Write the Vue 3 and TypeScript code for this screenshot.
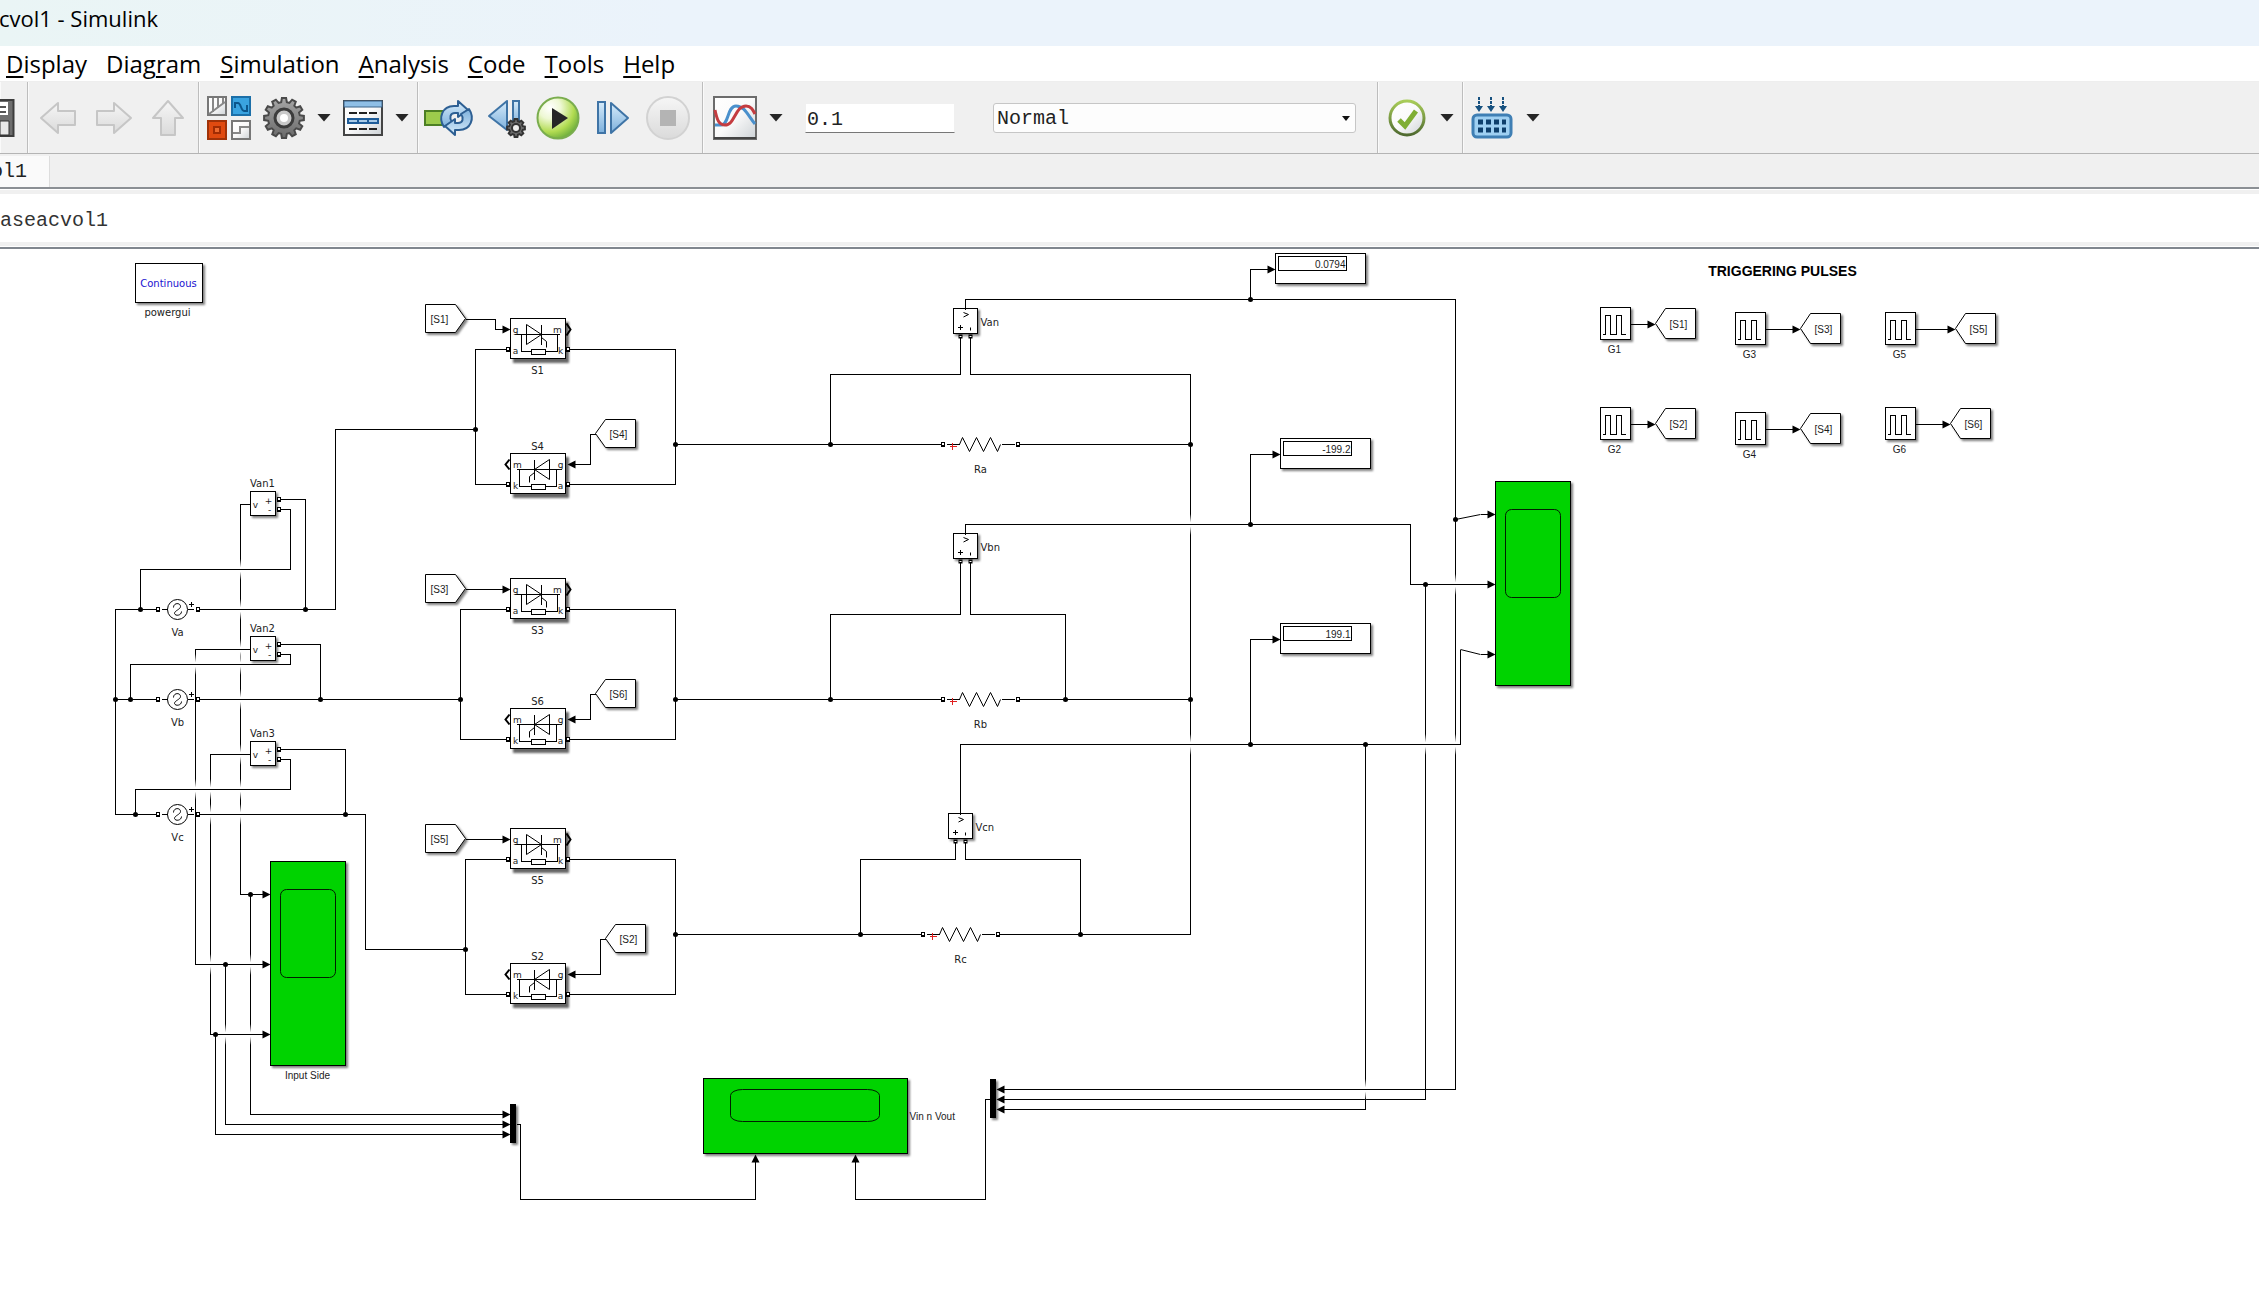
<script setup lang="ts">
import { ref } from 'vue'

interface MenuItem { before: string; key: string; after: string }
interface Point { x: number; y: number }
interface Tag extends Point { label: string }
interface Label extends Point { text: string }

const menus: MenuItem[] = [
  { before: '', key: 'D', after: 'isplay' },
  { before: 'Diag', key: 'r', after: 'am' },
  { before: '', key: 'S', after: 'imulation' },
  { before: '', key: 'A', after: 'nalysis' },
  { before: '', key: 'C', after: 'ode' },
  { before: '', key: 'T', after: 'ools' },
  { before: '', key: 'H', after: 'elp' },
]

const stopTime = ref('0.1')
const mode = ref('Normal')

function gearPath(c: number, outer: number, inner: number, teeth: number): string {
  const step = (Math.PI * 2) / teeth
  const parts: string[] = []
  for (let i = 0; i < teeth; i++) {
    const a = i * step - Math.PI / 2
    const pts: [number, number][] = [[inner, -0.34], [outer, -0.2], [outer, 0.2], [inner, 0.34]]
    for (const [r, f] of pts) {
      const px = (c + r * Math.cos(a + f * step)).toFixed(2)
      const py = (c + r * Math.sin(a + f * step)).toFixed(2)
      parts.push(`${parts.length ? 'L' : 'M'}${px} ${py}`)
    }
  }
  return parts.join('') + 'Z'
}
const bigGear = gearPath(21, 20, 16, 12)
const smallGear = gearPath(10, 9, 7, 8)

const wires: string[] = [
  // source side
  'M157 609H115V814H157', 'M115 699H157',
  'M199 609H335V429H475', 'M199 699H460', 'M199 814H365V949H465',
  'M250 504H240V894H263', 'M280 499H305V609', 'M280 509H290V569H140V609',
  'M250 649H195V964H263', 'M280 644H320V699', 'M280 654H290V664H130V699',
  'M250 754H210V1034H263', 'M280 749H345V814', 'M280 759H290V789H135V814',
  'M250 894V1114H503', 'M225 964V1124H503', 'M215 1034V1134H503',
  'M516 1124H520V1199H755V1161',
  // thyristor bridges
  'M508 349H475V484H508', 'M568 349H675V484H568',
  'M508 609H460V739H508', 'M568 609H675V739H568',
  'M508 859H465V994H508', 'M568 859H675V994H568',
  'M465 319H495V329H503', 'M465 589H503', 'M465 839H503',
  'M595 434H590V464H573', 'M595 694H590V719H573', 'M605 939H600V974H573',
  // loads
  'M675 444H942', 'M1018 444H1190', 'M675 699H942', 'M1018 699H1190',
  'M675 934H922', 'M998 934H1190V374H970V337', 'M830 444V374H960V337',
  'M830 699V614H960V562', 'M970 562V614H1065V699',
  'M860 934V859H955V842', 'M965 842V859H1080V934',
  // measurements
  'M965 309V299H1455V1089H1003', 'M965 534V524H1410V584H1488',
  'M960 814V744H1460V649', 'M1425 584V1099H1003', 'M1365 744V1109H1003',
  'M1250 299V269H1268', 'M1250 524V454H1273', 'M1250 744V639H1273',
  'M1480 514H1488', 'M1480 654H1488',
  'M990 1099H985V1199H855V1161',
  // pulse generators
  'M1630 324H1648', 'M1765 329H1793', 'M1915 329H1948',
  'M1630 424H1648', 'M1765 429H1793', 'M1915 424H1943',
]

const hops: [number, number][] = [
  [240, 569], [240, 609], [240, 649], [240, 664], [240, 699], [240, 754], [240, 789], [240, 814],
  [195, 664], [195, 789], [210, 789], [210, 814], [210, 964],
  [250, 964], [250, 1034], [225, 1034],
  [1190, 524], [1190, 744], [1455, 584], [1455, 744], [1425, 744], [1365, 1089],
]

const dots: [number, number][] = [
  [140, 609], [305, 609], [115, 699], [130, 699], [320, 699], [135, 814], [345, 814],
  [250, 894], [225, 964], [215, 1034], [475, 429], [460, 699], [465, 949],
  [675, 444], [675, 699], [675, 934], [830, 444], [830, 699], [860, 934],
  [1065, 699], [1080, 934], [1190, 444], [1190, 699],
  [1250, 299], [1250, 524], [1250, 744], [1365, 744], [1425, 584], [1455, 519],
]

const arrowsRight: [number, number][] = [
  [270, 894], [270, 964], [270, 1034], [510, 1114], [510, 1124], [510, 1134],
  [510, 329], [510, 589], [510, 839], [1275, 269], [1280, 454], [1280, 639],
  [1495, 514], [1495, 584], [1495, 654],
  [1655, 324], [1800, 329], [1955, 329], [1655, 424], [1800, 429], [1950, 424],
]
const arrowsLeft: [number, number][] = [
  [567, 464], [567, 719], [567, 974], [996, 1089], [996, 1099], [996, 1109],
]
const arrowsUp: [number, number][] = [[755, 1154], [855, 1154]]

const ports: [number, number][] = [
  [157, 609], [197, 609], [157, 699], [197, 699], [157, 814], [197, 814],
  [278, 499], [278, 509], [278, 644], [278, 654], [278, 749], [278, 759],
  [507, 349], [507, 484], [507, 609], [507, 739], [507, 859], [507, 994],
  [567, 349], [567, 484], [567, 609], [567, 739], [567, 859], [567, 994],
  [942, 444], [1017, 444], [942, 699], [1017, 699], [922, 934], [997, 934],
]

const forward: Point[] = [{ x: 510, y: 318 }, { x: 510, y: 578 }, { x: 510, y: 828 }]
const reverse: Point[] = [{ x: 510, y: 453 }, { x: 510, y: 708 }, { x: 510, y: 963 }]

const fromTags: Tag[] = [
  { x: 425, y: 304, label: '[S1]' }, { x: 425, y: 574, label: '[S3]' }, { x: 425, y: 824, label: '[S5]' },
]
const returnTags: Tag[] = [
  { x: 595, y: 419, label: '[S4]' }, { x: 595, y: 679, label: '[S6]' }, { x: 605, y: 924, label: '[S2]' },
]
const gotoTags: Tag[] = [
  { x: 1655, y: 308, label: '[S1]' }, { x: 1800, y: 313, label: '[S3]' }, { x: 1955, y: 313, label: '[S5]' },
  { x: 1655, y: 408, label: '[S2]' }, { x: 1800, y: 413, label: '[S4]' }, { x: 1950, y: 408, label: '[S6]' },
]
const pulses: Tag[] = [
  { x: 1600, y: 307, label: 'G1' }, { x: 1735, y: 312, label: 'G3' }, { x: 1885, y: 312, label: 'G5' },
  { x: 1600, y: 407, label: 'G2' }, { x: 1735, y: 412, label: 'G4' }, { x: 1885, y: 407, label: 'G6' },
]
const displays: Tag[] = [
  { x: 1275, y: 253, label: '0.0794' }, { x: 1280, y: 438, label: '-199.2' }, { x: 1280, y: 623, label: '199.1' },
]
const sources: Tag[] = [
  { x: 177, y: 609, label: 'Va' }, { x: 177, y: 699, label: 'Vb' }, { x: 177, y: 814, label: 'Vc' },
]
const inputMeters: Tag[] = [
  { x: 250, y: 491, label: 'Van1' }, { x: 250, y: 636, label: 'Van2' }, { x: 250, y: 741, label: 'Van3' },
]
const loadMeters: Tag[] = [
  { x: 953, y: 308, label: 'Van' }, { x: 953, y: 533, label: 'Vbn' }, { x: 948, y: 813, label: 'Vcn' },
]
const resistors: Tag[] = [
  { x: 942, y: 444, label: 'Ra' }, { x: 942, y: 699, label: 'Rb' }, { x: 922, y: 934, label: 'Rc' },
]
const switchLabels: Label[] = [
  { x: 537, y: 373, text: 'S1' }, { x: 537, y: 449, text: 'S4' }, { x: 537, y: 633, text: 'S3' },
  { x: 537, y: 704, text: 'S6' }, { x: 537, y: 883, text: 'S5' }, { x: 537, y: 959, text: 'S2' },
]
</script>

<template>
  <div class="window">
    <header class="titlebar"><span class="title">cvol1 - Simulink</span></header>

    <nav class="menubar" aria-label="Main menu">
      <button v-for="m in menus" :key="m.key" type="button" class="menu">{{ m.before }}<u>{{ m.key }}</u>{{ m.after }}</button>
    </nav>

    <div class="toolbar" role="toolbar" aria-label="Simulation toolbar">
      <div class="group g-file">
        <button type="button" aria-label="Save">
          <svg width="15" height="38" viewBox="0 0 15 38">
            <path d="M0 1H13.500V37H0" fill="#6e6e6e" stroke="#3d3d3d" stroke-width="2" />
            <path d="M0 3H8V16H0Z" fill="#fff" />
            <path d="M0 8H6M0 13H6" stroke="#555" stroke-width="2" />
            <path d="M0 22H9V36H0Z" fill="#e8e8e8" stroke="#333" stroke-width="1" />
          </svg>
        </button>
      </div>

      <div class="group g-nav">
        <button type="button" aria-label="Back">
          <svg width="36" height="32" viewBox="0 0 36 32"><path d="M1 16L18 1V9H35V23H18V31Z" fill="url(#pale)" stroke="#c6c6c6" stroke-width="2" stroke-linejoin="round" /></svg>
        </button>
        <button type="button" aria-label="Forward">
          <svg width="36" height="32" viewBox="0 0 36 32"><path d="M35 16L18 1V9H1V23H18V31Z" fill="url(#pale)" stroke="#c6c6c6" stroke-width="2" stroke-linejoin="round" /></svg>
        </button>
        <button type="button" aria-label="Up to parent">
          <svg width="32" height="36" viewBox="0 0 32 36"><path d="M16 1L31 18H23V35H9V18H1Z" fill="url(#pale)" stroke="#c6c6c6" stroke-width="2" stroke-linejoin="round" /></svg>
        </button>
      </div>

      <div class="group g-model">
        <button type="button" aria-label="Library browser">
          <svg width="44" height="44" viewBox="0 0 44 44">
            <rect x="1" y="1" width="18" height="18" fill="url(#silver)" stroke="#777" stroke-width="2" />
            <path d="M6 2V16M11 2V12M16 2V8M2 18L18 6" stroke="#888" stroke-width="2" fill="none" />
            <rect x="25" y="1" width="18" height="18" fill="#3aa3e0" stroke="#1c6fa8" stroke-width="2" />
            <path d="M28 12V7H31C34 7 34 15 37 15H40V9" stroke="#0c568c" stroke-width="2" fill="none" />
            <rect x="1" y="25" width="18" height="18" fill="#e04a10" stroke="#a03208" stroke-width="2" />
            <rect x="7" y="31" width="6" height="6" fill="#ee6a30" stroke="#a02c04" stroke-width="2" />
            <rect x="25" y="25" width="18" height="18" fill="url(#silver)" stroke="#777" stroke-width="2" />
            <path d="M26 37H33V31H42" stroke="#888" stroke-width="2" fill="none" />
          </svg>
        </button>
        <button type="button" aria-label="Model configuration parameters">
          <svg width="42" height="42" viewBox="0 0 42 42">
            <path :d="bigGear" fill="url(#steel)" stroke="#4a4a4a" stroke-width="2" />
            <circle cx="21" cy="21" r="9" fill="#c9c9c9" stroke="#3c3c3c" stroke-width="3" />
            <circle cx="21" cy="21" r="4" fill="#fff" />
          </svg>
        </button>
        <button type="button" class="caret" aria-label="More configuration"></button>
        <button type="button" aria-label="Model explorer">
          <svg width="40" height="36" viewBox="0 0 40 36">
            <rect x="1" y="1" width="38" height="34" fill="url(#silver)" stroke="#444" stroke-width="2" />
            <rect x="1" y="1" width="38" height="6" fill="#8fbfe6" stroke="#3a6288" stroke-width="1" />
            <path d="M6 13H34M6 29H34" stroke="#222" stroke-width="2" stroke-dasharray="8 2" />
            <rect x="4" y="18" width="32" height="6" fill="#1e5c99" />
            <path d="M6 21H34" stroke="#a9cbe8" stroke-width="2" stroke-dasharray="8 2" />
          </svg>
        </button>
        <button type="button" class="caret" aria-label="More explorers"></button>
      </div>

      <div class="group g-run">
        <button type="button" aria-label="Update diagram">
          <svg width="48" height="36" viewBox="0 0 48 36">
            <rect x="1" y="11" width="20" height="14" fill="#9ccb4c" stroke="#4c7f24" stroke-width="2" />
            <path d="M20 27C14 18 18 6 30 6H34V1L44 10L34 17V13H31C26 13 25 18 28 22Z" fill="url(#sky)" stroke="#2d5f93" stroke-width="2" stroke-linejoin="round" />
            <path transform="rotate(180 32.5 18)" d="M20 27C14 18 18 6 30 6H34V1L44 10L34 17V13H31C26 13 25 18 28 22Z" fill="url(#sky)" stroke="#2d5f93" stroke-width="2" stroke-linejoin="round" />
          </svg>
        </button>
        <button type="button" class="narrow" aria-label="Step back">
          <svg width="38" height="42" viewBox="0 0 38 42">
            <path d="M19 4V33L1 19Z" fill="url(#sky)" stroke="#3f74a6" stroke-width="2" stroke-linejoin="round" />
            <rect x="25" y="4" width="6" height="24" fill="url(#sky)" stroke="#3f74a6" stroke-width="2" />
            <g transform="translate(18 21)">
              <path :d="smallGear" fill="#6d6d6d" stroke="#333" stroke-width="2" />
              <circle cx="10" cy="10" r="4" fill="#eee" stroke="#333" stroke-width="2" />
            </g>
          </svg>
        </button>
        <button type="button" aria-label="Run">
          <svg width="44" height="44" viewBox="0 0 44 44">
            <circle cx="22" cy="22" r="20.500" fill="url(#lime)" stroke="#7aad4e" stroke-width="2" />
            <path d="M16 12L32 22L16 33Z" fill="#262626" />
          </svg>
        </button>
        <button type="button" aria-label="Step forward">
          <svg width="34" height="34" viewBox="-1 0 34 34">
            <rect x="1" y="1" width="7" height="31" fill="url(#sky)" stroke="#3f74a6" stroke-width="2" />
            <path d="M14 2V32L31 17Z" fill="url(#sky)" stroke="#3f74a6" stroke-width="2" stroke-linejoin="round" />
          </svg>
        </button>
        <button type="button" aria-label="Stop">
          <svg width="44" height="44" viewBox="0 0 44 44">
            <circle cx="22" cy="22" r="21" fill="url(#pale)" stroke="#d2d2d2" stroke-width="2" />
            <rect x="14" y="14" width="16" height="16" fill="#b4b4b4" />
          </svg>
        </button>
      </div>

      <div class="group g-sim">
        <button type="button" aria-label="Simulation data inspector">
          <svg width="44" height="44" viewBox="0 0 44 44">
            <rect x="1" y="1" width="42" height="42" fill="url(#silver)" stroke="#6c6c6c" stroke-width="2" />
            <path d="M1 42H43" stroke="#444" stroke-width="2" />
            <path d="M2 29H8C16 29 14 10 23 10C32 10 35 20 42 28" fill="none" stroke="#4a90cc" stroke-width="3" />
            <path d="M2 14C4 24 6 29 12 29C22 29 22 10 33 10C38 10 40 14 42 18" fill="none" stroke="#c43c40" stroke-width="3" />
          </svg>
        </button>
        <button type="button" class="caret" aria-label="More data views"></button>
        <input v-model="stopTime" class="stop-time" type="text" aria-label="Simulation stop time" />
        <span class="mode">
          <select v-model="mode" aria-label="Simulation mode"><option>Normal</option></select>
          <svg class="mode-arrow" width="8" height="5" viewBox="0 0 8 5"><path d="M0 0H8L4 5Z" fill="#111" /></svg>
        </span>
      </div>

      <div class="group g-check">
        <button type="button" aria-label="Model advisor">
          <svg width="38" height="38" viewBox="0 0 38 38">
            <circle cx="19" cy="19" r="17" fill="url(#silver)" stroke="url(#olive)" stroke-width="3" />
            <path d="M11 21L17 27L28 12" fill="none" stroke="#7fae34" stroke-width="5" />
          </svg>
        </button>
        <button type="button" class="caret" aria-label="More checks"></button>
      </div>

      <div class="group g-build">
        <button type="button" aria-label="Build model">
          <svg width="40" height="42" viewBox="0 0 40 42">
            <path d="M7 0V9M19 0V9M31 0V9" stroke="#17517f" stroke-width="2" stroke-dasharray="3 1" />
            <path d="M3 9H11L7 15ZM15 9H23L19 15ZM27 9H35L31 15Z" fill="#17517f" />
            <rect x="1" y="18" width="38" height="22" rx="4" fill="#9fd0f2" stroke="#3f7fb4" stroke-width="3" />
            <path d="M6 25H34M6 33H34" stroke="#0e3f6c" stroke-width="5" stroke-dasharray="5 3" />
          </svg>
        </button>
        <button type="button" class="caret" aria-label="More build actions"></button>
      </div>
    </div>

    <div class="tabs"><button type="button" class="tab"><span>ol1</span></button></div>
    <div class="crumbs">aseacvol1</div>

    <main class="canvas">
      <svg class="diagram" width="100%" height="1059" role="img" aria-label="Three phase AC voltage controller model">
        <defs>
          <linearGradient id="pale" x1="0" y1="0" x2="0" y2="1"><stop offset="0" stop-color="#f6f6f6" /><stop offset="1" stop-color="#dadada" /></linearGradient>
          <linearGradient id="silver" x1="0" y1="0" x2="1" y2="1"><stop offset="0" stop-color="#fff" /><stop offset="0.500" stop-color="#fafafa" /><stop offset="1" stop-color="#cdd2d6" /></linearGradient>
          <linearGradient id="steel" x1="0" y1="0" x2="0" y2="1"><stop offset="0" stop-color="#a6a6a6" /><stop offset="1" stop-color="#6a6a6a" /></linearGradient>
          <linearGradient id="sky" x1="0" y1="0" x2="0" y2="1"><stop offset="0" stop-color="#d6ebfa" /><stop offset="1" stop-color="#7db0dc" /></linearGradient>
          <linearGradient id="olive" x1="0" y1="0" x2="0" y2="1"><stop offset="0" stop-color="#a8cc58" /><stop offset="1" stop-color="#4f6a30" /></linearGradient>
          <radialGradient id="lime" cx="0.300" cy="0.250" r="0.900"><stop offset="0" stop-color="#fff" /><stop offset="0.300" stop-color="#eef8d4" /><stop offset="0.650" stop-color="#b2dc52" /><stop offset="1" stop-color="#4f9a32" /></radialGradient>
          <linearGradient id="hop" x1="0" y1="0" x2="0" y2="1">
            <stop offset="0" stop-color="#fff" stop-opacity="0" /><stop offset="0.400" stop-color="#fff" stop-opacity="1" />
            <stop offset="0.600" stop-color="#fff" stop-opacity="1" /><stop offset="1" stop-color="#fff" stop-opacity="0" />
          </linearGradient>
        </defs>

        <g transform="translate(0.5 -248.5)">
          <path v-for="w in wires" :key="w" :d="w" class="wire" />
          <g v-for="h in hops" :key="`h${h[0]}-${h[1]}`">
            <rect :x="h[0] - 1.5" :y="h[1] - 10.5" width="3" height="21" fill="url(#hop)" />
            <path :d="`M${h[0] - 4} ${h[1]}h8`" class="wire" />
          </g>
          <path d="M1455 519L1480 514M1460 649L1480 654" class="thin" />
          <circle v-for="d in dots" :key="`d${d[0]}-${d[1]}`" :cx="d[0]" :cy="d[1]" r="2.500" />

          <!-- powergui -->
          <rect x="135" y="263" width="67" height="39" class="block" />
          <text x="168" y="286" class="lbl blue">Continuous</text>
          <text x="167" y="315" class="lbl">powergui</text>

          <!-- AC sources -->
          <g v-for="s in sources" :key="s.label" :transform="`translate(${s.x} ${s.y})`">
            <path d="M-16 0H-10M10 0H16" class="wire" />
            <circle r="10" class="outline" />
            <path d="M-4 -2C-4 -7 3 -7 3 -3C3 0 -3 1 -3 4C-2 7 4 6 4 2" class="outline" />
            <path d="M11.500 -5H16.500M14 -7.500V-2.500" class="thin" />
            <text y="26" class="lbl">{{ s.label }}</text>
          </g>

          <!-- input voltage meters -->
          <g v-for="m in inputMeters" :key="m.label" :transform="`translate(${m.x} ${m.y})`">
            <rect width="25" height="24" class="block" />
            <text x="5" y="16" class="pin">v</text>
            <text x="18" y="12" class="pin">+</text>
            <text x="19" y="21" class="pin">-</text>
            <text x="12" y="-5" class="lbl">{{ m.label }}</text>
          </g>

          <!-- forward thyristors -->
          <g v-for="t in forward" :key="`f${t.y}`" :transform="`translate(${t.x} ${t.y})`">
            <path d="M56 5L60 11L56 17" class="chevron" />
            <rect width="55" height="40" class="block deep" />
            <path d="M4 16H49M11 16V33H47V16M31 6V26" class="wire" />
            <path d="M16 6V26L31 16ZM31 19L36 23V29" class="glyph" />
            <rect x="21" y="31" width="14" height="5" class="part" />
            <text x="5" y="14" class="pin">g</text><text x="47" y="14" class="pin">m</text>
            <text x="5" y="35" class="pin">a</text><text x="50" y="35" class="pin">k</text>
          </g>
          <!-- reverse thyristors -->
          <g v-for="t in reverse" :key="`r${t.y}`" :transform="`translate(${t.x} ${t.y})`">
            <path d="M-1 6L-5 11L-1 16" class="chevron" />
            <rect width="55" height="40" class="block deep" />
            <path d="M6 16H51M9 16V33H46V16M24 6V26" class="wire" />
            <path d="M39 6V26L24 16ZM24 19L19 23V29" class="glyph" />
            <rect x="21" y="31" width="14" height="5" class="part" />
            <text x="7" y="14" class="pin">m</text><text x="50" y="14" class="pin">g</text>
            <text x="5" y="35" class="pin">k</text><text x="50" y="35" class="pin">a</text>
          </g>
          <text v-for="l in switchLabels" :key="l.text" :x="l.x" :y="l.y" class="lbl">{{ l.text }}</text>

          <!-- signal tags -->
          <g v-for="t in fromTags" :key="`a${t.label}`" :transform="`translate(${t.x} ${t.y})`">
            <path d="M0 0H30L40 14L30 28H0Z" class="block" /><text x="14" y="18" class="tag">{{ t.label }}</text>
          </g>
          <g v-for="t in returnTags" :key="`b${t.label}`" :transform="`translate(${t.x} ${t.y})`">
            <path d="M0 14L10 0H40V28H10Z" class="block" /><text x="23" y="18" class="tag">{{ t.label }}</text>
          </g>
          <g v-for="t in gotoTags" :key="`c${t.label}`" :transform="`translate(${t.x} ${t.y})`">
            <path d="M0 15L10 0H40V30H10Z" class="block" /><text x="23" y="19" class="tag">{{ t.label }}</text>
          </g>
          <g v-for="p in pulses" :key="p.label" :transform="`translate(${p.x} ${p.y})`">
            <rect width="30" height="32" class="block" />
            <path d="M2 27H5V8H10V27H16V8H21V27H25" class="wire" />
            <text x="14" y="45" class="tag">{{ p.label }}</text>
          </g>
          <text x="1782" y="275" class="heading">TRIGGERING PULSES</text>

          <!-- load voltage meters -->
          <g v-for="m in loadMeters" :key="m.label" :transform="`translate(${m.x} ${m.y})`">
            <rect width="24" height="25" class="block" />
            <path d="M12 -4V1" class="wire" />
            <path d="M10 4L15 6L10 8.500M4.500 19H9.500M7 16.500V21.500M17 19V22" class="thin" />
            <rect x="5" y="26" width="4" height="4" /><rect x="15" y="26" width="4" height="4" />
            <path d="M6 28h2M16 28h2" stroke="#fff" />
            <text x="27" y="17" class="lbl start">{{ m.label }}</text>
          </g>

          <!-- resistors -->
          <g v-for="r in resistors" :key="r.label" :transform="`translate(${r.x} ${r.y})`">
            <path d="M4 0H17M59 0H72" class="wire" />
            <path d="M17 0L20 -7L27 7L34 -7L41 7L48 -7L55 7L58 0" class="glyph" />
            <path d="M7 2H14M10 -2V5" class="red" />
            <text x="38" y="28" class="lbl">{{ r.label }}</text>
          </g>

          <!-- numeric displays -->
          <g v-for="d in displays" :key="d.label" :transform="`translate(${d.x} ${d.y})`">
            <rect width="90" height="30" class="block" />
            <rect x="3" y="3" width="68" height="14" class="part" />
            <text x="70" y="14" class="tag end">{{ d.label }}</text>
          </g>

          <!-- scopes -->
          <rect x="270" y="861" width="75" height="204" class="block scope" />
          <rect x="280" y="889" width="55" height="88" rx="6" class="screen" />
          <text x="307" y="1078" class="tag">Input Side</text>
          <rect x="703" y="1078" width="204" height="75" class="block scope" />
          <rect x="730" y="1089" width="149" height="32" rx="12" ry="6" class="screen" />
          <text x="909" y="1119" class="tag start">Vin n Vout</text>
          <rect x="1495" y="481" width="75" height="204" class="block scope" />
          <rect x="1505" y="509" width="55" height="88" rx="6" class="screen" />

          <!-- muxes -->
          <rect x="510" y="1104" width="5" height="38" class="block mux" />
          <rect x="990" y="1079" width="5" height="38" class="block mux" />

          <g v-for="p in ports" :key="`p${p[0]}-${p[1]}`" :transform="`translate(${p[0] - 1.5} ${p[1] - 2.5})`" class="port">
            <rect width="4" height="5" /><rect x="1" y="1" width="2" height="2" fill="#fff" />
          </g>
          <path v-for="a in arrowsRight" :key="`ar${a[0]}-${a[1]}`" :d="`M${a[0]} ${a[1]}l-8 -4v8z`" />
          <path v-for="a in arrowsLeft" :key="`al${a[0]}-${a[1]}`" :d="`M${a[0]} ${a[1]}l8 -4v8z`" />
          <path v-for="a in arrowsUp" :key="`au${a[0]}`" :d="`M${a[0]} ${a[1]}l-4 8h8z`" />
        </g>
      </svg>
    </main>
  </div>
</template>

<style>
body { margin: 0; background: #fff; }
</style>

<style scoped>
.window { display: flex; flex-direction: column; font-family: "Open Sans", "Noto Sans", sans-serif; color: #000; overflow: hidden; }
button { border: 0; padding: 0; margin: 0; background: none; font: inherit; color: inherit; }
.titlebar { height: 46px; display: flex; background: linear-gradient(90deg, #eaf5f5, #ebf3fb 30%); }
.title { width: 158px; height: 36px; display: flex; justify-content: flex-end; align-items: center; overflow: hidden; white-space: nowrap; font-size: 22px; line-height: 30px; }
.menubar { height: 35px; display: flex; align-items: center; gap: 19px; padding-left: 6px; border-bottom: 1px solid #eee; }
.menu { font-size: 24px; line-height: 32px; white-space: nowrap; }
.menu u { text-decoration-thickness: 2px; text-underline-offset: 3px; text-decoration-skip-ink: none; }

.toolbar { height: 71px; display: flex; background: #f0f0f0; border-bottom: 1px solid #b4b4b4; }
.group { display: flex; align-items: center; border-right: 1px solid #bdbdbd; box-shadow: inset 1px 0 #fafafa; }
.group button { display: flex; align-items: center; }
.group svg { display: block; overflow: visible; flex: none; }
.g-file { width: 27px; }
.g-nav { gap: 20px; padding: 0 14px 0 12px; }
.g-model { gap: 12px; padding: 0 8px; }
.g-run { gap: 16px; padding: 0 12px 0 6px; }
.g-run .narrow { width: 32px; }
.g-sim { gap: 12px; padding: 0 21px 0 10px; }
.g-check { gap: 14px; padding: 0 8px 0 10px; }
.g-build { gap: 14px; padding-left: 9px; border-right: 0; }
.group .caret { width: 14px; height: 8px; background: #262626; clip-path: polygon(0 0, 100% 0, 50% 100%); }
.stop-time, select { box-sizing: border-box; height: 30px; font-family: "Liberation Mono", monospace; font-size: 20px; line-height: 24px; color: #222; border-radius: 0; outline: 0; }
.stop-time { width: 150px; margin-left: 10px; padding: 3px 1px 0; border: 1px solid #f0f0f0; border-bottom-color: #777; background: #fff; }
.mode { position: relative; width: 363px; margin-left: 26px; display: flex; }
select { width: 100%; padding: 3px 3px 0; border: 1px solid #c6c6c6; border-radius: 3px; background: #fdfdfd; appearance: none; }
.mode-arrow { position: absolute; right: 6px; top: 13px; }

.tabs { height: 33px; display: flex; align-items: flex-end; background: #f0f0f0; border-bottom: 2px solid #8b8f94; font-family: "Liberation Mono", monospace; font-size: 20px; color: #222; }
.tab { width: 50px; height: 31px; background: #fafafa; border-right: 1px solid #ddd; }
.tab span { width: 27px; display: flex; justify-content: flex-end; overflow: hidden; line-height: 32px; }
.crumbs { height: 48px; margin-top: 1px; border: solid #f0f0f0; border-width: 4px 0; font: 20px/53px "Liberation Mono", monospace; color: #333; }
.canvas { margin-top: 1px; border-top: 2px solid #80868e; }
.diagram { display: block; }

.wire { fill: none; stroke: #000; stroke-width: 1px; shape-rendering: crispEdges; }
.thin, .outline, .glyph { fill: none; stroke: #000; stroke-width: 1px; }
.red { fill: none; stroke: #e02020; stroke-width: 1px; shape-rendering: crispEdges; }
.chevron { fill: none; stroke: #000; stroke-width: 2px; }
.block { fill: #fff; stroke: #000; stroke-width: 1px; filter: drop-shadow(2px 2px 1px rgba(0, 0, 0, 0.5)); }
.deep { filter: drop-shadow(3px 4px 1px rgba(0, 0, 0, 0.6)); }
.part { fill: #fff; stroke: #000; stroke-width: 1px; shape-rendering: crispEdges; }
.port { shape-rendering: crispEdges; }
.scope { fill: #00d300; }
.screen { fill: none; stroke: #011f01; stroke-width: 1px; }
.mux { fill: #000; }
text { fill: #1c1c1c; text-anchor: middle; font-size: 10px; }
.lbl { font-family: "DejaVu Sans", sans-serif; }
.blue { fill: #1a12d0; }
.pin { font-family: "DejaVu Sans", sans-serif; font-size: 9px; }
.tag { font-family: "Liberation Sans", sans-serif; }
.start { text-anchor: start; }
.end { text-anchor: end; }
.heading { font-family: "Liberation Sans", sans-serif; font-size: 14px; font-weight: 700; fill: #000; }
</style>
